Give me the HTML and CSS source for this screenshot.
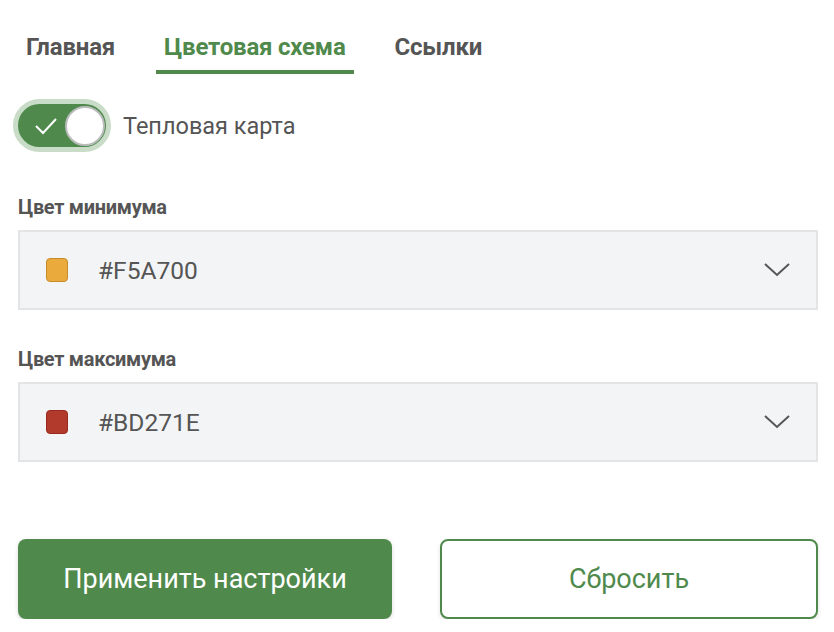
FILE: index.html
```html
<!DOCTYPE html>
<html lang="ru">
<head>
    <meta charset="UTF-8">
    <meta name="viewport" content="width=device-width, initial-scale=1.0">
    <title>Настройки</title>
    <link rel="stylesheet" href="styles.css">
</head>
<body>
    <div class="panel">
        <nav class="tabs">
            <a class="tab">Главная</a>
            <a class="tab active">Цветовая схема</a>
            <a class="tab">Ссылки</a>
        </nav>

        <label class="switch-row">
            <span class="switch">
                <svg class="check" width="24" height="18" viewBox="0 0 24 18">
                    <path d="M2 9 L9 16 L22 2" fill="none" stroke="#fff" stroke-width="2"/>
                </svg>
                <span class="knob"></span>
            </span>
            <span class="switch-text">Тепловая карта</span>
        </label>

        <div class="field">
            <p class="field-label">Цвет минимума</p>
            <div class="select">
                <span class="swatch min"></span>
                <span class="value">#F5A700</span>
                <svg class="chevron" width="26" height="14" viewBox="0 0 26 14">
                    <path d="M1 1 L13 12 L25 1" fill="none" stroke="#555" stroke-width="2"/>
                </svg>
            </div>
        </div>

        <div class="field">
            <p class="field-label">Цвет максимума</p>
            <div class="select">
                <span class="swatch max"></span>
                <span class="value">#BD271E</span>
                <svg class="chevron" width="26" height="14" viewBox="0 0 26 14">
                    <path d="M1 1 L13 12 L25 1" fill="none" stroke="#555" stroke-width="2"/>
                </svg>
            </div>
        </div>

        <div class="actions">
            <button class="btn primary">Применить настройки</button>
            <button class="btn outline">Сбросить</button>
        </div>
    </div>
</body>
</html>
```

FILE: styles.css
```css
*{
    margin: 0;
    box-sizing: border-box;
}
body{
    background: #fff;
    font-family: Roboto, "Noto Sans", sans-serif;
    color: #555;
}
.panel{
    padding: 26px 16px 0 18px;
}
.tabs{
    display: flex;
    gap: 33px;
}
.tab{
    padding: 7px 8px 9px;
    font-size: 24px;
    font-weight: 700;
    color: #555;
    border-bottom: 4px solid transparent;
    line-height: 28px;
    letter-spacing: -0.2px;
}
.tab.active{
    color: #4f8a4c;
    border-bottom-color: #4f8a4c;
}
.switch-row{
    display: flex;
    align-items: center;
    gap: 12px;
    margin-top: 25px;
    margin-left: -5px;
}
.switch{
    width: 98px;
    height: 53px;
    border-radius: 27px;
    border: 5px solid #c9dcc7;
    background: #4f8a4c;
    display: flex;
    align-items: center;
    justify-content: space-between;
    padding: 0 1px 0 16px;
}
.knob{
    width: 40px;
    height: 40px;
    border-radius: 50%;
    background: #fff;
    border: 2px solid #b9bcbb;
}
.switch-text{
    font-size: 23.5px;
    color: #555;
}
.field{
    margin-top: 43px;
}
.field + .field{
    margin-top: 37px;
}
.field-label{
    font-size: 20px;
    font-weight: 700;
    color: #555;
    line-height: 24px;
    letter-spacing: -0.3px;
    margin-bottom: 11px;
}
.select{
    height: 80px;
    background: #f3f4f5;
    border: 2px solid #e3e4e6;
    display: flex;
    align-items: center;
    padding: 0 26px 0 26px;
}
.swatch{
    width: 22px;
    height: 24px;
    border-radius: 4px;
    border: 1px solid;
}
.swatch.min{
    background: #eaab3c;
    border-color: #c68b2b;
}
.swatch.max{
    background: #b23a2c;
    border-color: #9a2a20;
}
.value{
    font-size: 24.5px;
    color: #555;
    margin-left: 30px;
    flex: 1;
}
.actions{
    display: flex;
    gap: 48px;
    margin-top: 77px;
}
.btn{
    flex: 1 1 0;
    min-width: 0;
    height: 80px;
    border-radius: 8px;
    font-family: Roboto, "Noto Sans", sans-serif;
    font-size: 27px;
    cursor: pointer;
}
.primary{
    background: #4f8a4c;
    color: #fff;
    border: none;
    box-shadow: 0 2px 4px rgba(0, 0, 0, 0.15);
}
.outline{
    background: #fff;
    color: #4f8a4c;
    border: 2px solid #4f8a4c;
    box-shadow: 0 2px 4px rgba(0, 0, 0, 0.12);
}
```
